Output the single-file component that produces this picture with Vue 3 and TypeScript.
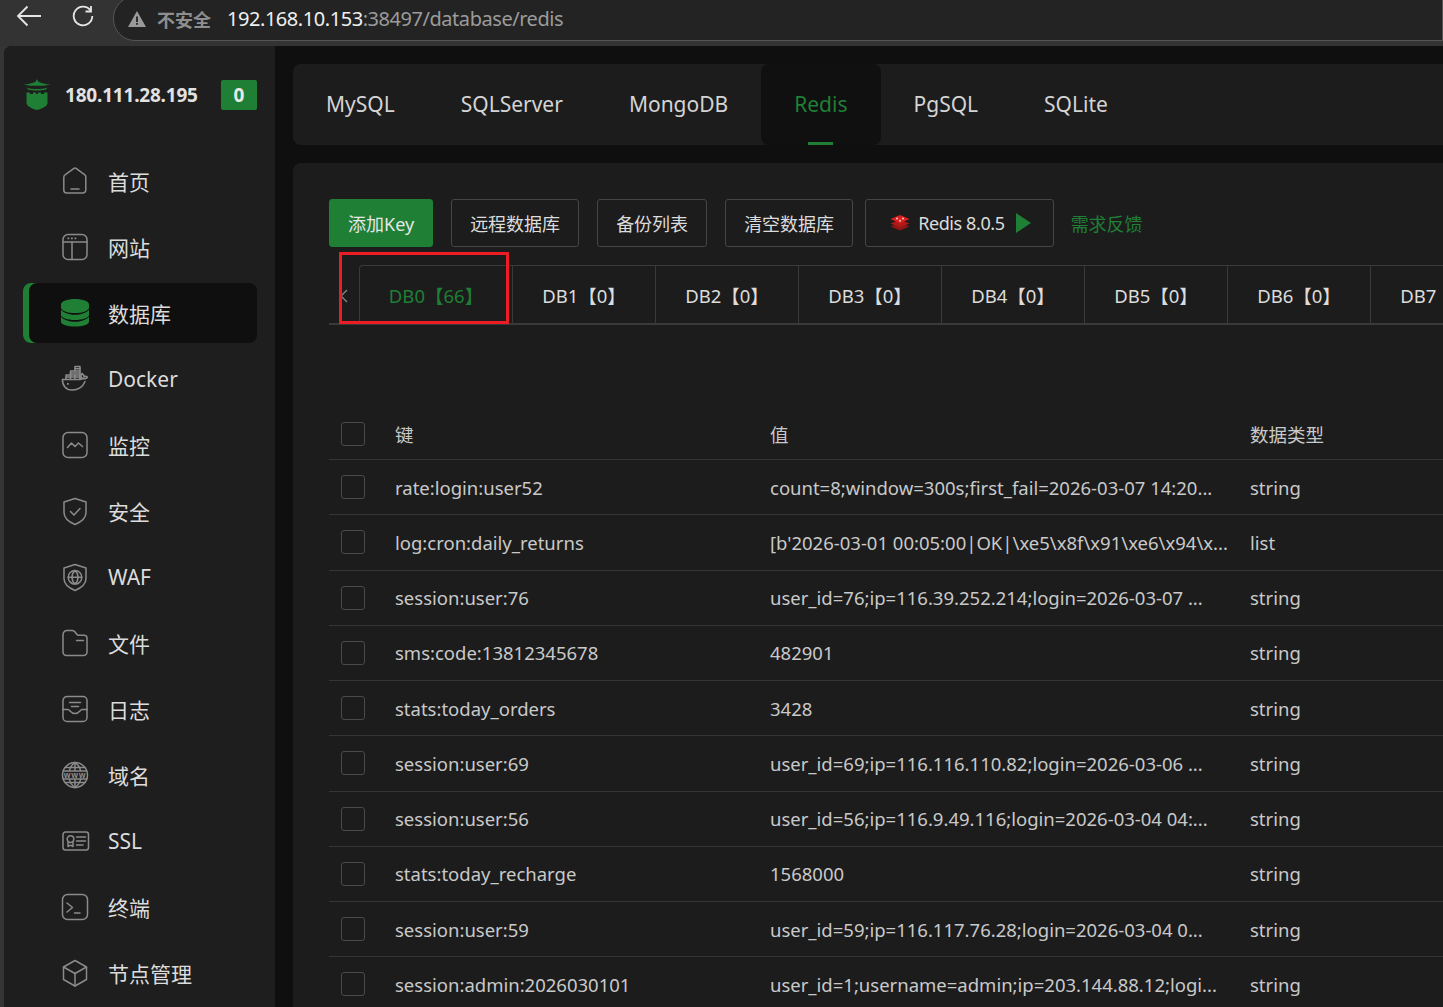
<script setup lang="ts">
interface Icon { lines: string[]; fills?: string[] }
interface Nav { label: string; icon: Icon; active?: boolean; www?: boolean }

const nav: Nav[] = [
  { label: '首页', icon: { lines: ['M4.4 7.6 12.6 1.6a2.4 2.4 0 0 1 2.8 0l8.2 6a3 3 0 0 1 1.2 2.4v13a3 3 0 0 1-3 3H5.800a3 3 0 0 1-3-3V10a3 3 0 0 1 1.600-2.400Z', 'M10 22h8'] } },
  { label: '网站', icon: { lines: ['M7 1.500h14a5 5 0 0 1 5 5v15a5 5 0 0 1-5 5H7a5 5 0 0 1-5-5v-15a5 5 0 0 1 5-5Z', 'M2 9h24', 'M11 9v17.500'], fills: ['M6.500 4.500h1.800v1.800H6.500z', 'M10 4.500h1.800v1.800H10z', 'M13.500 4.500h1.800v1.800h-1.800z'] } },
  { label: '数据库', active: true, icon: { lines: [], fills: ['M14 0C6.300 0 0 2.400 0 5.300v3.400C0 11.600 6.300 14 14 14s14-2.400 14-5.300V5.300C28 2.400 21.700 0 14 0Z', 'M0 10.800v5.200C0 18.700 6.300 21 14 21s14-2.300 14-5v-5.200C25 14.200 19.500 15.800 14 15.800S3 14.200 0 10.800Z', 'M0 17.800v4.900C0 25.500 6.300 27.600 14 27.600s14-2.100 14-4.900v-4.900C25 21.200 19.500 22.800 14 22.800S3 21.200 0 17.800Z'] } },
  { label: 'Docker', icon: { lines: ['M1.500 14.500h18c1 0 1.800-.6 2-1.500 1.800 1 4 .8 5-.8-.9-.8-2.300-1-3.400-.5-.2-1.500-1-2.500-2.200-3.200-1 1.200-1.200 2.800-.6 4', 'M1.500 14.500c-.3 6 3.500 10.500 9.500 10.500 6.500 0 11-3.500 13-8.500', 'M5 14V10h14v4', 'M9.500 10V6h9.500v8', 'M14 6V1.500h5V6', 'M5 12h14', 'M9.500 8h9.500', 'M9.500 10v4', 'M14 10v4', 'M14 3.800h5'], fills: ['M6 18h1.800v1.800H6z'] } },
  { label: '监控', icon: { lines: ['M7 1.500h14a5 5 0 0 1 5 5v15a5 5 0 0 1-5 5H7a5 5 0 0 1-5-5v-15a5 5 0 0 1 5-5Z', 'M6.500 16.500 10.500 12l3.500 3.500 3.500-3.500 4 3.500'] } },
  { label: '安全', icon: { lines: ['M14 1.500 25 5v10.500c0 6-5 9.500-11 12-6-2.500-11-6-11-12V5l11-3.500Z', 'M9.500 14.500 13 18l6-6.500'] } },
  { label: 'WAF', icon: { lines: ['M14 1.500 25 5v10.500c0 6-5 9.500-11 12-6-2.500-11-6-11-12V5l11-3.500Z', 'M14 7.500a6.800 6.800 0 1 0 0 13.600 6.800 6.800 0 0 0 0-13.600Z', 'M14 7.500c-4 3.800-4 9.800 0 13.600 4-3.800 4-9.800 0-13.600Z', 'M7.200 14.300h13.600'] } },
  { label: '文件', icon: { lines: ['M2 5.500a4 4 0 0 1 4-4h5.500c1.300 0 2 .8 2.800 1.800l1.200 1.700c.7 1 1.400 1.300 2.500 1.300H23a3 3 0 0 1 3 3V23a3.500 3.500 0 0 1-3.500 3.500h-17A3.500 3.500 0 0 1 2 23V5.500Z', 'M15.500 11.500h7'] } },
  { label: '日志', icon: { lines: ['M6 1.500h16a4 4 0 0 1 4 4v17a4 4 0 0 1-4 4H6a4 4 0 0 1-4-4v-17a4 4 0 0 1 4-4Z', 'M2 14.500h5c2 0 2.500 4 7 4s5-4 7-4h5', 'M8.500 7.500h11', 'M10.500 11.500h7'] } },
  { label: '域名', www: true, icon: { lines: ['M14 1.500a12.500 12.500 0 1 0 0 25 12.500 12.500 0 0 0 0-25Z', 'M14 1.500c-3.500 2.500-5 5-5.500 8', 'M14 1.500c3.500 2.500 5 5 5.500 8', 'M14 1.500v8', 'M4 6.500h20', 'M2.500 10h23', 'M14 26.500c-3.500-2.500-5-5-5.500-8', 'M14 26.500c3.500-2.500 5-5 5.500-8', 'M14 26.500v-8', 'M4 21.500h20', 'M2.500 18h23'] } },
  { label: 'SSL', icon: { lines: ['M4.500 5h20.500a2.500 2.500 0 0 1 2.500 2.500v13a2.500 2.500 0 0 1-2.500 2.500H4.500a2.500 2.500 0 0 1-2.500-2.500v-13A2.500 2.500 0 0 1 4.500 5Z', 'M9.500 8.800a3.300 3.300 0 1 0 0 6.600 3.300 3.300 0 0 0 0-6.600Z', 'M7 15v4.500l2.500-1.300 2.500 1.300V15', 'M15.500 10h9', 'M15.500 14h9', 'M15.500 18h6.500'] } },
  { label: '终端', icon: { lines: ['M6.500 1.500h15a5 5 0 0 1 5 5v15a5 5 0 0 1-5 5h-15a5 5 0 0 1-5-5v-15a5 5 0 0 1 5-5Z', 'M6 10l5.500 4.500L6 19', 'M13.500 20h5.500'] } },
  { label: '节点管理', icon: { lines: ['M14 1.500 25.500 8v12.500L14 27 2.500 20.500V8L14 1.500Z', 'M2.500 8 14 14.500 25.500 8', 'M14 14.500V27'] } },
]

const modules = ['MySQL', 'SQLServer', 'MongoDB', 'Redis', 'PgSQL', 'SQLite']
const dbs = ['DB0【66】', 'DB1【0】', 'DB2【0】', 'DB3【0】', 'DB4【0】', 'DB5【0】', 'DB6【0】', 'DB7【0】', 'DB8【0】']
const rows = [
  ['rate:login:user52', 'count=8;window=300s;first_fail=2026-03-07 14:20...', 'string'],
  ['log:cron:daily_returns', "[b'2026-03-01 00:05:00|OK|\\xe5\\x8f\\x91\\xe6\\x94\\x...", 'list'],
  ['session:user:76', 'user_id=76;ip=116.39.252.214;login=2026-03-07 ...', 'string'],
  ['sms:code:13812345678', '482901', 'string'],
  ['stats:today_orders', '3428', 'string'],
  ['session:user:69', 'user_id=69;ip=116.116.110.82;login=2026-03-06 ...', 'string'],
  ['session:user:56', 'user_id=56;ip=116.9.49.116;login=2026-03-04 04:...', 'string'],
  ['stats:today_recharge', '1568000', 'string'],
  ['session:user:59', 'user_id=59;ip=116.117.76.28;login=2026-03-04 0...', 'string'],
  ['session:admin:2026030101', 'user_id=1;username=admin;ip=203.144.88.12;logi...', 'string'],
]
</script>

<template>
  <div class="page">
    <header class="chrome">
      <svg class="back" viewBox="0 0 26 22"><path d="M25 11H2M11.500 1.500 2 11l9.500 9.500" /></svg>
      <svg class="reload" viewBox="0 0 22 22"><path d="M18.500 5.500A9.300 9.300 0 1 0 20.300 11" /><path d="M19 1v5.500h-5.500" /></svg>
      <div class="omnibox">
        <svg class="warn" viewBox="0 0 18 16"><path d="M9 0 18 16H0L9 0Z" /><path class="warn-mark" d="M8.100 5.500h1.800v5.500H8.100zM8.100 12h1.800v1.800H8.100z" /></svg>
        <span class="insecure">不安全</span>
        <span class="url"><b>192.168.10.153</b>:38497/database/redis</span>
      </div>
    </header>

    <div class="app">
      <aside class="sidebar">
        <div class="brand">
          <svg class="logo" viewBox="0 0 28 31">
            <path class="logo-roof" d="M14 0l1.200 2.500c3 1.800 7.500 2.800 12.300 3-3.500 1-6.500 1.300-13.500 1.300S4 6.500.5 5.500C5.300 5.300 9.800 4.300 12.800 2.500L14 0Z" />
            <path class="logo-roof" d="M3.500 8.500c3 1 6.500 1.500 10.500 1.500s7.500-.5 10.500-1.500l-2 2.300c-2.500.5-5.500.8-8.500.8s-6-.3-8.500-.8l-2-2.300Z" />
            <path class="logo-roof" d="M3.500 13.500h3.500v1.500h3v-1.500h3v1.500h2v-1.500h3v1.500h3v-1.500h3.500V24c0 3-5 5.500-10.500 7C8.500 29.500 3.500 27 3.500 24V13.500Z" />
          </svg>
          <span class="ip">180.111.28.195</span>
          <span class="badge">0</span>
        </div>
        <nav class="menu">
          <a v-for="item in nav" :key="item.label" class="menu-item" :class="{ active: item.active }">
            <svg class="menu-icon" viewBox="0 0 28 28">
              <path v-for="d in item.icon.lines" :key="d" class="stroke" :d="d" />
              <path v-for="d in item.icon.fills || []" :key="d" class="fill" :d="d" />
              <text v-if="item.www" x="14" y="16.800" class="www">www</text>
            </svg>
            <span>{{ item.label }}</span>
          </a>
        </nav>
      </aside>

      <main class="main">
        <div class="modules">
          <div v-for="m in modules" :key="m" class="module" :class="{ current: m === 'Redis' }">{{ m }}</div>
        </div>

        <section class="card">
          <div class="toolbar">
            <button class="btn primary">添加Key</button>
            <button class="btn">远程数据库</button>
            <button class="btn">备份列表</button>
            <button class="btn">清空数据库</button>
            <button class="btn version">
              <svg class="redis" viewBox="0 0 20 18">
                <path d="M10 9 19.500 12.500 10 16.500.5 12.500 10 9Z" fill="#8f1616" />
                <path d="M10 6 19.500 9.500 10 13.500.5 9.500 10 6Z" fill="#b01818" />
                <path d="M10 1 19.500 5 10 9.800.5 5 10 1Z" fill="#d81f1f" />
                <circle cx="7" cy="4.500" r="1" fill="#f6c9c9" />
                <circle cx="13" cy="4.500" r="1" fill="#f6c9c9" />
                <circle cx="10" cy="6.800" r="1" fill="#f6c9c9" />
              </svg>
              <span>Redis 8.0.5</span>
              <svg class="play" viewBox="0 0 15 20"><path d="M0 0 15 10 0 20Z" /></svg>
            </button>
            <a class="feedback">需求反馈</a>
          </div>

          <div class="db-tabs">
            <svg class="chevron" viewBox="0 0 8 14"><path d="M7 1 1 7l6 6" /></svg>
            <div v-for="(d, i) in dbs" :key="d" class="db-tab" :class="{ selected: i === 0 }">{{ d }}</div>
            <div class="marker"></div>
          </div>

          <div class="table">
            <div class="row head">
              <span class="check"></span><span>键</span><span>值</span><span>数据类型</span>
            </div>
            <div v-for="r in rows" :key="r[0]" class="row">
              <span class="check"></span>
              <span>{{ r[0] }}</span>
              <span>{{ r[1] }}</span>
              <span>{{ r[2] }}</span>
            </div>
          </div>
        </section>
      </main>
    </div>
  </div>
</template>

<style>
html, body { margin: 0; background: #0f0f0f; overflow: hidden; }
</style>

<style scoped>
.page {
  width: 1443px;
  height: 1007px;
  overflow: hidden;
  display: flex;
  flex-direction: column;
  background: #353535;
  font-family: "Noto Sans", "Noto Sans CJK SC", sans-serif;
  color: #dcdcdc;
}
.chrome {
  height: 46px;
  flex: none;
  display: flex;
  align-items: flex-start;
  padding-left: 16px;
  box-sizing: border-box;
  background: #333;
}
.back { width: 26px; height: 22px; margin-top: 5px; fill: none; stroke: #e6e6e6; stroke-width: 1.800; }
.reload { width: 22px; height: 22px; margin: 5px 0 0 30px; fill: none; stroke: #e6e6e6; stroke-width: 1.800; }
.omnibox {
  margin: -4px 0 0 19px;
  height: 43px;
  flex: 1;
  display: flex;
  align-items: center;
  padding: 0 0 0 14px;
  border: 1px solid #555;
  border-radius: 22px 0 0 22px;
  background: #232323;
}
.warn { width: 18px; height: 16px; fill: #9a9a9a; }
.warn-mark { fill: #232323; }
.insecure { margin-left: 11px; font-size: 18px; font-weight: 700; color: #8e8e8e; }
.url { margin-left: 16px; font-size: 20px; letter-spacing: -.45px; color: #9b9b9b; }
.url b { font-weight: 400; color: #f0f0f0; }

.app {
  flex: 1;
  min-height: 0;
  display: flex;
  margin-left: 4px;
  background: #0f0f0f;
  border-radius: 8px 0 0 0;
  overflow: hidden;
}
.sidebar {
  width: 271px;
  flex: none;
  box-sizing: border-box;
  padding: 33px 18px 0 19px;
  background: #1e1e1e;
}
.brand { display: flex; align-items: center; height: 31px; margin-bottom: 41px; }
.logo { width: 28px; height: 31px; flex: none; }
.logo-roof { fill: #1f7f35; }
.ip { margin-left: 14px; font-size: 19px; font-weight: 700; letter-spacing: -.2px; color: #e2e2e2; white-space: nowrap; }
.badge {
  margin-left: auto;
  width: 36px;
  height: 30px;
  line-height: 30px;
  text-align: center;
  border-radius: 2px;
  background: #1f7f35;
  font-size: 19px;
  font-weight: 700;
  color: #e8e8e8;
}
.menu { display: flex; flex-direction: column; gap: 6px; }
.menu-item {
  height: 60px;
  display: flex;
  align-items: center;
  padding-left: 38px;
  font-size: 21px;
  border-radius: 8px;
  color: #dcdcdc;
}
.menu-item.active {
  background: #0f0f0f;
  box-shadow: inset 6px 0 0 #1f7f35;
}
.menu-icon { width: 28px; height: 28px; margin-right: 19px; flex: none; overflow: visible; }
.stroke { fill: none; stroke: #8b8b8b; stroke-width: 1.500; stroke-linecap: round; stroke-linejoin: round; }
.fill { fill: #8b8b8b; }
.active .fill { fill: #1f7f35; }
.www { font-size: 8px; font-weight: 700; letter-spacing: .6px; text-anchor: middle; fill: #8b8b8b; }

.main { flex: 1; min-width: 0; padding: 18px 0 0 18px; }
.modules {
  height: 81px;
  display: flex;
  background: #1c1c1c;
  border-radius: 8px 0 0 8px;
}
.module {
  position: relative;
  padding: 0 33px;
  line-height: 81px;
  font-size: 21px;
  color: #d4d4d4;
  border-radius: 8px;
}
.module.current { background: #101010; color: #1f7f35; }
.module.current::after {
  content: "";
  position: absolute;
  left: 47px;
  bottom: 0;
  width: 25px;
  height: 3px;
  background: #1f7f35;
}
.card {
  margin-top: 18px;
  padding: 36px 0 0 36px;
  height: 900px;
  background: #1c1c1c;
  border-radius: 8px 0 0 0;
}
.toolbar { display: flex; align-items: center; height: 48px; }
.btn {
  height: 48px;
  margin-right: 18px;
  padding: 0 18px;
  box-sizing: border-box;
  display: flex;
  align-items: center;
  border: 1px solid #454545;
  border-radius: 3px;
  background: transparent;
  color: #dcdcdc;
  font: inherit;
  font-size: 18px;
}
.btn.primary { background: #1f7f35; border-color: #1f7f35; margin-right: 18px; color: #e6e6e6; }
.btn.version { margin-left: -6px; margin-right: 17px; padding: 0 22px 0 24px; letter-spacing: -.4px; }
.redis { width: 20px; height: 18px; margin-right: 8px; }
.play { width: 15px; height: 20px; margin-left: 11px; fill: #1f7f35; }
.feedback { font-size: 18px; color: #1f7f35; }

.db-tabs {
  position: relative;
  display: flex;
  align-items: stretch;
  height: 60px;
  margin-top: 18px;
  padding-left: 30px;
  box-sizing: border-box;
  border-bottom: 2px solid #3a3a3a;
}
.chevron { position: absolute; left: 11px; top: 24px; width: 8px; height: 14px; fill: none; stroke: #8b8b8b; stroke-width: 1.200; }
.db-tab {
  flex: none;
  width: 143px;
  box-sizing: border-box;
  border-top: 1px solid #3a3a3a;
  border-right: 1px solid #3a3a3a;
  display: flex;
  align-items: center;
  justify-content: center;
  font-size: 18.500px;
  color: #dcdcdc;
  white-space: nowrap;
}
.db-tab.selected {
  width: 154px;
  border-left: 1px solid #3a3a3a;
  border-radius: 4px 0 0 0;
  color: #1f7f35;
}
.marker {
  position: absolute;
  left: 10px;
  top: -13px;
  width: 170px;
  height: 72px;
  box-sizing: border-box;
  border: 3px solid #ed1c24;
  pointer-events: none;
}
.table { margin-top: 83px; }
.row {
  display: grid;
  grid-template-columns: 66px 375px 480px 1fr;
  align-items: center;
  height: 55.250px;
  box-sizing: border-box;
  border-bottom: 1px solid #343434;
  font-size: 18.500px;
  color: #c9c9c9;
  white-space: nowrap;
}
.row.head { height: 52px; color: #c9c9c9; }
.check {
  width: 24px;
  height: 24px;
  margin-left: 12px;
  box-sizing: border-box;
  border: 1px solid #4a4a4a;
  border-radius: 3px;
}
</style>
